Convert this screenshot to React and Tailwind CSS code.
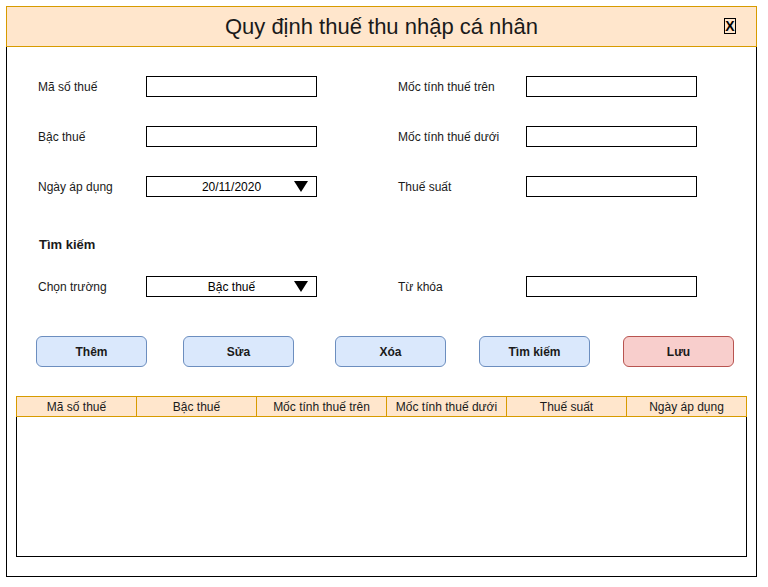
import React from "react";

const Field = ({ label, value, select, labelW }) => (
  <div className="flex items-center">
    <div className={`${labelW} text-[12px] text-[#1a1a1a]`}>{label}</div>
    <div className="relative flex h-[21px] w-[171px] items-center justify-center border border-black bg-white text-[12px] text-black">
      {value}
      {select && (
        <svg className="absolute right-[8px] top-[4px]" width="14" height="11" viewBox="0 0 14 11">
          <polygon points="0,0 14,0 7,11" fill="#000" />
        </svg>
      )}
    </div>
  </div>
);

const Row = ({ children, className = "" }) => (
  <div className={`flex pl-[31px] ${className}`}>{children}</div>
);

const Btn = ({ children, red, className = "" }) => (
  <button
    className={`h-[31px] w-[111px] rounded-[6px] border text-[12px] font-bold text-[#1a1a1a] ${
      red ? "border-[#b85450] bg-[#f8cecc]" : "border-[#6c8ebf] bg-[#dae8fc]"
    } ${className}`}
  >
    {children}
  </button>
);

const cols = [
  ["Mã số thuế", "w-[120px]"],
  ["Bậc thuế", "w-[120px]"],
  ["Mốc tính thuế trên", "w-[130px]"],
  ["Mốc tính thuế dưới", "w-[120px]"],
  ["Thuế suất", "w-[120px]"],
  ["Ngày áp dụng", "w-[119px]"],
];

export default function App() {
  return (
    <div className="min-h-[587px] bg-white pl-[6px] pt-[6px]" style={{ fontFamily: '"Liberation Sans", Arial, sans-serif' }}>
      <div className="w-[751px]">
        <div className="relative flex h-[41px] items-center justify-center border border-[#d79b00] bg-[#ffe6cc]">
          <span className="text-[22px] text-[#1a1a1a]">Quy định thuế thu nhập cá nhân</span>
          <span className="absolute left-[717px] top-[11px] flex h-[16px] w-[12px] items-center justify-center border border-black text-[14px] font-bold leading-none">
            X
          </span>
        </div>
        <div className="flow-root h-[530px] border-x border-b border-black">
          <Row className="mt-[29px]">
            <Field label="Mã số thuế" labelW="w-[108px]" />
            <div className="w-[81px]" />
            <Field label="Mốc tính thuế trên" labelW="w-[128px]" />
          </Row>
          <Row className="mt-[29px]">
            <Field label="Bậc thuế" labelW="w-[108px]" />
            <div className="w-[81px]" />
            <Field label="Mốc tính thuế dưới" labelW="w-[128px]" />
          </Row>
          <Row className="mt-[29px]">
            <Field label="Ngày áp dụng" labelW="w-[108px]" value="20/11/2020" select />
            <div className="w-[81px]" />
            <Field label="Thuế suất" labelW="w-[128px]" />
          </Row>
          <div className="mt-[40px] pl-[32px] text-[13px] font-bold leading-[16px] text-[#1a1a1a]">Tìm kiếm</div>
          <Row className="mt-[23px]">
            <Field label="Chọn trường" labelW="w-[108px]" value="Bậc thuế" select />
            <div className="w-[81px]" />
            <Field label="Từ khóa" labelW="w-[128px]" />
          </Row>
          <div className="mt-[39px] flex pl-[29px]">
            <Btn>Thêm</Btn>
            <Btn className="ml-[36px]">Sửa</Btn>
            <Btn className="ml-[41px]">Xóa</Btn>
            <Btn className="ml-[33px]">Tìm kiếm</Btn>
            <Btn red className="ml-[33px]">Lưu</Btn>
          </div>
          <div className="mx-[9px] mt-[29px]">
            <div className="flex h-[21px] border border-[#d79b00] bg-[#ffe6cc]">
              {cols.map(([t, w], i) => (
                <div
                  key={t}
                  className={`${w} flex shrink-0 items-center justify-center text-[12px] text-[#1a1a1a] ${
                    i < cols.length - 1 ? "border-r border-[#d79b00]" : ""
                  }`}
                >
                  {t}
                </div>
              ))}
            </div>
            <div className="h-[140px] border-x border-b border-black" />
          </div>
        </div>
      </div>
    </div>
  );
}
